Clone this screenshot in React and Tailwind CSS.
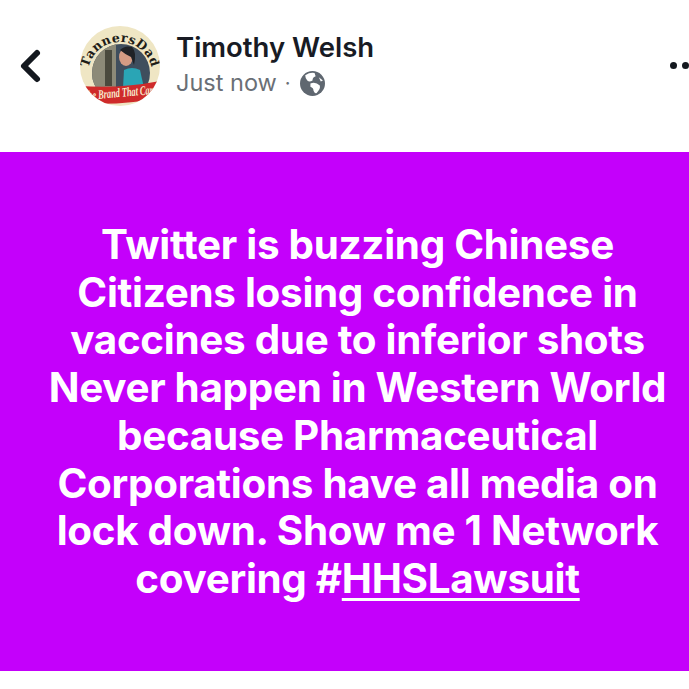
function Avatar() {
  return (
    <svg width="80" height="80" viewBox="0 0 80 80" className="shrink-0">
      <defs>
        <clipPath id="outer">
          <circle cx="40" cy="40" r="40" />
        </clipPath>
        <clipPath id="inner">
          <circle cx="41" cy="47" r="29" />
        </clipPath>
        <path id="arc" d="M8 48 A 32 32 0 0 1 72 48" />
      </defs>
      <g clipPath="url(#outer)">
        <rect width="80" height="80" fill="#efe6c4" />
        <g clipPath="url(#inner)">
          <rect width="80" height="80" fill="#3f4e5d" />
          <rect x="12" y="14" width="24" height="50" fill="#8c8a78" />
          <rect x="25" y="24" width="7" height="36" fill="#4a4a3e" />
          <path d="M43 62 L44 44 Q52 40 60 44 L64 62 Z" fill="#2aa5b5" />
          <ellipse cx="46" cy="31" rx="7" ry="9" fill="#d49c84" />
          <path d="M40 24 Q45 19 52 21 Q57 26 54 39 L51 31 Q46 29 40 24 Z" fill="#1f2226" />
        </g>
        <text fontFamily="'DejaVu Serif', serif" fontWeight="700" fontSize="12.5" fill="#1f1d18" letterSpacing="0.4">
          <textPath href="#arc" startOffset="50%" textAnchor="middle">
            TannersDad
          </textPath>
        </text>
        <path d="M0 60 Q40 63 80 55 L80 72 Q40 80 0 77 Z" fill="#cf2a2a" />
        <text
          x="40"
          y="71"
          textAnchor="middle"
          textLength="74"
          lengthAdjust="spacingAndGlyphs"
          transform="rotate(-5 40 71)"
          fontFamily="'Liberation Serif', serif"
          fontStyle="italic"
          fontWeight="700"
          fontSize="13"
          fill="#f6ecd0"
        >
          The Brand That Care
        </text>
      </g>
    </svg>
  );
}

function Globe() {
  return (
    <svg width="25" height="25" viewBox="0 0 24 24" className="shrink-0">
      <circle cx="12" cy="12" r="12" fill="#5f6770" />
      <path d="M5 4 Q10 1 14 2 L15 5 Q12 6 12 9 Q9 11 7 9 Q5 7 5 4 Z" fill="#fff" />
      <path d="M10 12 Q15 10 19 14 Q20 17 16 21 Q14 22 13 19 Q13 16 10 15 Z" fill="#fff" />
      <path d="M18 6 L22 9 L20 10 Z" fill="#fff" />
    </svg>
  );
}

export default function App() {
  return (
    <div className="w-[689px] h-[689px] overflow-hidden bg-white font-['Inter',sans-serif]">
      <div className="h-[152px] flex items-start">
        <svg width="24" height="36" viewBox="0 0 24 36" className="ml-[18px] mt-[48px] shrink-0">
          <path d="M19 5 L6 18 L19 31" fill="none" stroke="#14181f" strokeWidth="6" strokeLinecap="round" strokeLinejoin="round" />
        </svg>
        <div className="ml-[38px] mt-[26px]">
          <Avatar />
        </div>
        <div className="ml-[16px] mt-[29px] flex-1">
          <div className="text-[27.5px] leading-[36px] font-semibold text-[#181b24]">Timothy Welsh</div>
          <div className="flex items-center mt-[1px] text-[23.5px] leading-[34px] text-[#6a6f76]">
            <span>Just now</span>
            <span className="ml-[8px] mr-[9px] text-[20px]">·</span>
            <Globe />
          </div>
        </div>
        <div className="flex gap-[5px] mt-[62px] shrink-0">
          <span className="w-[7px] h-[7px] rounded-full bg-[#14181f]" />
          <span className="w-[7px] h-[7px] rounded-full bg-[#14181f]" />
        </div>
      </div>
      <div className="h-[519px] bg-[#c400fb] pt-[69px] pl-[26px] text-center text-white font-bold text-[40.4px] leading-[47.7px] tracking-[-0.3px] whitespace-nowrap">
        <div>Twitter is buzzing Chinese</div>
        <div>Citizens losing confidence in</div>
        <div>vaccines due to inferior shots</div>
        <div>Never happen in Western World</div>
        <div>because Pharmaceutical</div>
        <div>Corporations have all media on</div>
        <div>lock down. Show me 1 Network</div>
        <div>
          covering #<span className="underline decoration-[3px] underline-offset-[5px]">HHSLawsuit</span>
        </div>
      </div>
    </div>
  );
}
